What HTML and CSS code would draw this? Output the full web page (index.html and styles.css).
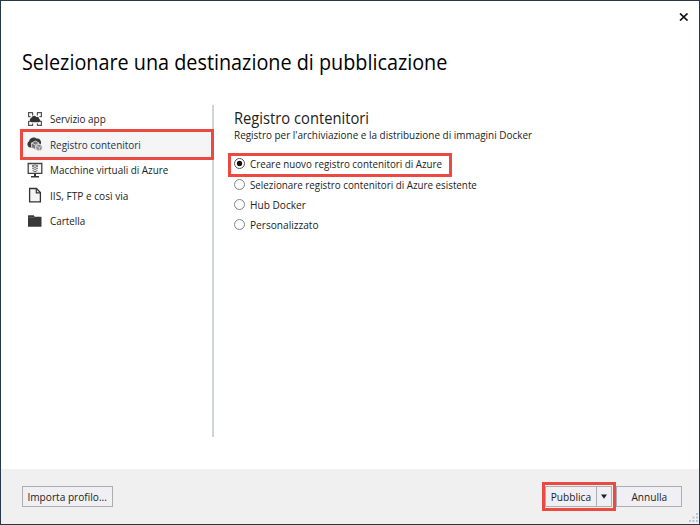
FILE: index.html
```
<!DOCTYPE html>
<html lang="it">
<head>
<meta charset="utf-8">
<title>Selezionare una destinazione di pubblicazione</title>
<link rel="stylesheet" href="styles.css">
</head>
<body>
<div class="dialog">
  <button class="close" aria-label="Chiudi"><svg width="10" height="8" viewBox="0 0 10 8"><path d="M1 .5 8.5 7.5M8.5 .5 1 7.5" stroke="#111" stroke-width="1.7"/></svg></button>
  <h1><span class="text t-title">Selezionare una destinazione di pubblicazione</span></h1>
  <main>
    <nav>
      <a class="item"><svg class="icon" viewBox="0 0 16 16"><path d="M6 1.600H1.600V6M10 1.600h4.400V6M6 14.400H1.600V10M10 14.400h4.400V10M5.600 1.600v3M10.400 1.600v3M5.600 14.400v-2M10.400 14.400v-2M1.600 5.600h2M14.400 5.600h-2M1.600 10.400h2M14.400 10.400h-2" fill="none" stroke="#555" stroke-width="1.2"/><path d="M4.500 11.300a2.200 2.200 0 0 1-.3-4.200A2.900 2.900 0 0 1 9.300 6a2.300 2.300 0 0 1 2.900 2 1.700 1.700 0 0 1-.5 3.300z" fill="#333"/></svg><span class="text">Servizio app</span></a>
      <a class="item selected"><svg class="icon" viewBox="0 0 16 16"><path d="M3 11.500C-.5 10.500 0 6 2 5.500 2.500 1 8 .5 9.500 2.500c3-.7 5 2 4.500 5L10 12z" fill="#383838"/><path d="m4.500 7 4-2 3.500 2-.2 4.500-3.300 2-4-2z" fill="#777" stroke="#ddd" stroke-width=".8"/><path d="m4.500 7 4 2 3.500-2M8.500 9v4" fill="none" stroke="#ddd" stroke-width=".8"/><circle cx="12" cy="11.500" r="3.200" fill="#888" stroke="#eee" stroke-width=".7"/><path d="m10.300 10.500 2 1 2-1M12.300 11.500v2.500" fill="none" stroke="#eee" stroke-width=".7"/></svg><span class="text">Registro contenitori</span></a>
      <a class="item"><svg class="icon" viewBox="0 0 16 16"><path d="M1.200 1.500h13.600v9.800H1.200z" fill="#f8f8f8" stroke="#444" stroke-width="1.300"/><path d="M7 11.500h2v2.500h3v1.400H4V14h3z" fill="#333"/><path d="m5 4 3-1.200L11 4 8 5.500zM5 6l3 1.500L11 6M5.500 8.500 8 9.700l2.500-1.200" fill="none" stroke="#666" stroke-width="1"/></svg><span class="text">Macchine virtuali di Azure</span></a>
      <a class="item"><svg class="icon" viewBox="0 0 16 16"><path d="M2.600 1.500h6.800l4 4v9.300H2.600z" fill="#f4f4f6" stroke="#333" stroke-width="1.300"/><path d="M9.300 1.500v4.300h4.300" fill="none" stroke="#333" stroke-width="1.200"/></svg><span class="text t-short">IIS, FTP e così via</span></a>
      <a class="item"><svg class="icon" viewBox="0 0 16 16"><path d="M1 3.800V3q0-.7.7-.7h5l1 1.500h6q.8 0 .8.700v8.700q0 .6-.7.600H1.700q-.7 0-.7-.6z" fill="#383838"/><path d="M1.500 4.400h6" stroke="#777" stroke-width=".6"/></svg><span class="text">Cartella</span></a>
    </nav>
    <section>
      <h2><span class="text t-head">Registro contenitori</span></h2>
      <p><span class="text t-sub">Registro per l'archiviazione e la distribuzione di immagini Docker</span></p>
      <div class="options">
        <label class="option marked"><i class="radio on"></i><span class="text">Creare nuovo registro contenitori di Azure</span></label>
        <label class="option"><i class="radio"></i><span class="text">Selezionare registro contenitori di Azure esistente</span></label>
        <label class="option"><i class="radio"></i><span class="text t-short">Hub Docker</span></label>
        <label class="option"><i class="radio"></i><span class="text t-short">Personalizzato</span></label>
      </div>
    </section>
  </main>
  <footer>
    <button class="btn import"><span class="text">Importa profilo...</span></button>
    <div class="split"><button class="btn publish"><span class="text">Pubblica</span></button><button class="btn arrow" aria-label="Altre opzioni"><svg width="6" height="5" viewBox="0 0 6 5"><path d="M0 .5h6L3 4.700z" fill="#222"/></svg></button></div>
    <button class="btn cancel"><span class="text">Annulla</span></button>
    <svg class="grip" width="11" height="11" viewBox="0 0 11 11" fill="#b9c3d6"><path d="M8 0h2v2H8zM4.500 3.500h2v2h-2zM8 3.500h2v2H8zM1 7h2v2H1zM4.500 7h2v2h-2zM8 7h2v2H8z"/></svg>
  </footer>
</div>
</body>
</html>
```
FILE: styles.css
```
*, *::before, *::after { box-sizing: border-box; }
body { margin: 0; font-family: "Open Sans", "Noto Sans", sans-serif; font-size: 11.5px; color: #222; }
h1, h2, p { margin: 0; font-weight: 400; white-space: nowrap; }
button { font: inherit; color: inherit; padding: 0; }
/* Condensed dialog lettering */
.text { display: inline-block; transform: scaleX(.852); transform-origin: 0 50%; }
.t-short { transform: scaleX(.88); }
.t-title { transform: scaleX(.921); }
.t-head { transform: scaleX(.92); }
.t-sub { transform: scaleX(.864); }
.dialog { position: relative; width: 700px; height: 525px; border: 1px solid #263848; background: #fff; display: flex; flex-direction: column; }
.close { position: absolute; left: 678px; top: 11px; width: 10px; height: 10px; border: 0; background: none; line-height: 0; }
h1 { height: 104px; padding: 46px 0 0 21px; font-size: 21.5px; line-height: 30px; color: #000; }
main { flex: 1; display: flex; }
nav { width: 213px; height: 332px; border-right: 2px solid #d0d4dc; padding-top: 1px; }
.item { position: relative; display: flex; align-items: center; height: 25.5px; padding-left: 26px; white-space: nowrap; }
.item .text:not(.t-short) { transform: scaleX(.86); }
.icon { width: 16px; height: 16px; margin-right: 7px; flex: none; }
.selected { color: #24344f; background: linear-gradient(#f5f5f5, #f5f5f5) 21px 0 / 190px 26px no-repeat; }
.selected::after { content: ""; position: absolute; left: 19px; top: -2.5px; width: 194px; height: 31px; border: 3px solid #eb4a43; z-index: 1; }
section { width: 466px; padding: 3px 0 0 20px; }
h2 { font-size: 16px; line-height: 20px; }
p { height: 15px; line-height: 14px; }
.options { padding-top: 6px; }
.option { position: relative; display: flex; align-items: center; height: 20.2px; gap: 5px; white-space: nowrap; }
.option.marked { height: 21px; margin-top: 4px; }
.marked::after { content: ""; position: absolute; left: -6px; top: 0; width: 224px; height: 24px; border: 3px solid #eb4a43; }
.radio { width: 11px; height: 11px; border: 1px solid #858585; border-radius: 50%; background: #fff; }
.on { border-color: #555; background: radial-gradient(circle, #111 2.400px, #fff 3.100px); }
footer { position: relative; height: 55px; background: #f0f0f0; padding: 17px 17px 0 21px; display: flex; }
.btn { height: 21px; border: 1px solid #adadb2; background: #f0f0f4; display: flex; align-items: center; justify-content: center; white-space: nowrap; }
.btn .text { transform: scaleX(.88); transform-origin: 50% 50%; }
.import { width: 91px; margin-right: auto; }
.split { position: relative; display: flex; margin-right: 4px; }
.publish { width: 52px; }
.arrow { width: 15px; border-left: 0; }
.split::after { content: ""; position: absolute; left: -3px; top: -4px; width: 74px; height: 29px; border: 3px solid #eb4a43; }
.cancel { width: 66px; }
.grip { position: absolute; right: 0; bottom: 0; }
```
